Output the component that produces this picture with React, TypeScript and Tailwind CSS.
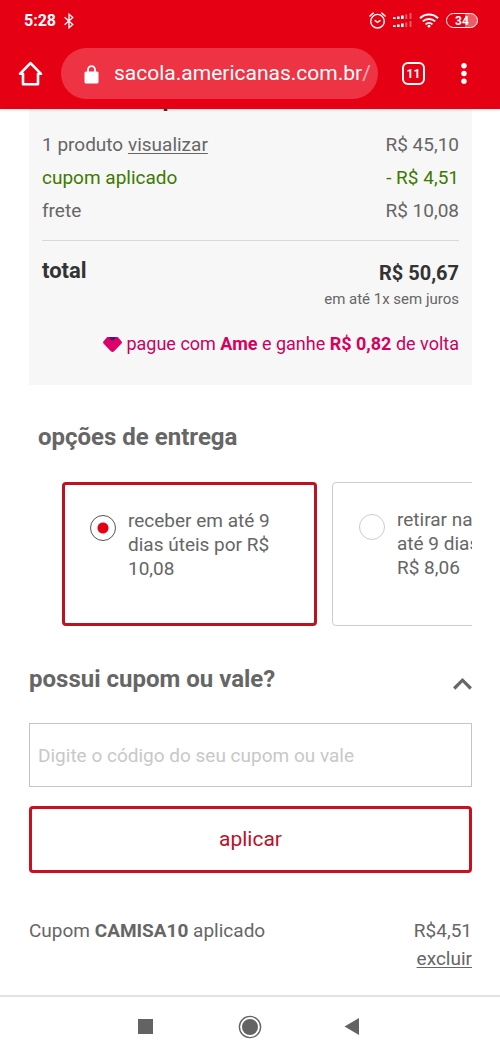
import { useState } from "react";
import clsx from "clsx";

const summary = [
  { label: "1 produto", value: "R$ 45,10", link: "visualizar" },
  { label: "cupom aplicado", value: "- R$ 4,51", discount: true },
  { label: "frete", value: "R$ 10,08" },
];

const deliveryOptions = [
  { id: "receber", text: "receber em até 9\ndias úteis por R$\n10,08" },
  { id: "retirar", text: "retirar na loja em\naté 9 dias por\nR$ 8,06" },
];

function StatusBar() {
  return (
    <div className="flex h-[41px] items-center justify-between pl-6 pr-[22px]">
      <div className="flex items-center gap-2">
        <span className="text-base font-bold">5:28</span>
        <svg width="10" height="16" viewBox="0 0 10 16" fill="none" stroke="currentColor" strokeWidth="1.3">
          <path d="M.6 4.2 8.8 11.4 5 14.8V1.2L8.8 4.6.6 11.8" />
        </svg>
      </div>
      <div className="flex items-center gap-[7px]">
        {/* alarm */}
        <svg width="17" height="17" viewBox="0 0 17 17" fill="none" stroke="currentColor" strokeWidth="1.4" strokeLinecap="round">
          <circle cx="8.5" cy="9.2" r="6.8" />
          <path d="M.9 4 4.2 1.1M16.1 4 12.8 1.1M6.2 8.6l2.3 1.8 2.5-1.8" />
        </svg>
        {/* dual sim signal */}
        <svg width="19" height="16" viewBox="0 0 19 16" fill="currentColor">
          <path d="M0 4.3h2.6V6H0zM4 3.4h2.6V6H4zM8 2.4h2.6V6H8zM0 12.3h2.6V14H0zM4 11.4h2.6V14H4zM8 10.4h2.6V14H8z" />
          <path opacity=".4" d="M12.4 1.4h1.8V6h-1.8zM16.6 0h1.8v6h-1.8zM12.4 9.4h1.8V14h-1.8zM16.6 8h1.8v6h-1.8z" />
        </svg>
        {/* wifi */}
        <svg width="20" height="15" viewBox="0 0 20 15" fill="none" stroke="currentColor" strokeWidth="2">
          <path d="M1 5.2a13 13 0 0 1 18 0M3.8 8.4a9 9 0 0 1 12.4 0M6.6 11.4a5 5 0 0 1 6.8 0" />
          <circle cx="10" cy="13.2" r="1.4" fill="currentColor" stroke="none" />
        </svg>
        <span className="flex h-[15px] w-8 items-center justify-center rounded-full border border-white bg-linear-to-r from-[#e60014] from-60% to-[#ef5a66] to-60% text-xs font-bold">
          34
        </span>
      </div>
    </div>
  );
}

function BrowserBar() {
  return (
    <div className="flex h-[68px] items-center pl-[18px] pr-6 pb-[3px]">
      <button aria-label="Início" className="mr-[18px]">
        <svg width="25" height="25" viewBox="0 0 25 25" fill="none" stroke="currentColor" strokeWidth="2.6" strokeLinejoin="round" strokeLinecap="round">
          <path d="M2 12.8 12.5 2.2 23 12.8h-3v10.4H5V12.8z" />
        </svg>
      </button>
      <div className="flex h-[51px] min-w-0 flex-1 items-center gap-[15px] rounded-full bg-[#ee3344] pt-px pl-[23px]">
        <svg width="15" height="19" viewBox="0 0 15 19" className="shrink-0">
          <path d="M4 8V4.7a3.5 3.5 0 0 1 7 0V8" fill="none" stroke="currentColor" strokeWidth="1.8" />
          <rect x="0.5" y="6.4" width="14" height="12" rx="1.5" fill="currentColor" />
        </svg>
        <span className="truncate text-[21px]">
          sacola.americanas.com.br<span className="opacity-60">/</span>
        </span>
      </div>
      <button
        aria-label="Abas"
        className="ml-6 flex size-[23px] items-center justify-center rounded-md border-2 border-white text-xs font-bold"
      >
        11
      </button>
      <button aria-label="Menu" className="ml-[27px] flex w-6 justify-center">
        <svg width="6" height="21" viewBox="0 0 6 21" fill="currentColor">
          <circle cx="3" cy="2.8" r="2.7" />
          <circle cx="3" cy="10.5" r="2.7" />
          <circle cx="3" cy="18.2" r="2.7" />
        </svg>
      </button>
    </div>
  );
}

function OrderSummary() {
  return (
    <section className="overflow-hidden bg-[#f7f7f7] px-[13px] pb-[25px]">
      {/* scrolled under the browser bar */}
      <div className="flex h-5 items-start overflow-hidden">
        <h2 className="-mt-[23px] text-2xl leading-6 font-bold text-[#333]">resumo do pedido</h2>
      </div>
      <dl className="flex flex-col">
        {summary.map((row) => (
          <div
            key={row.label}
            className={clsx("flex h-[33px] items-center justify-between", row.discount ? "text-[#3d7a00]" : "text-[#666]")}
          >
            <dt>
              {row.label}
              {row.link && (
                <>
                  {" "}
                  <a href="#produtos" className="underline underline-offset-2">{row.link}</a>
                </>
              )}
            </dt>
            <dd>{row.value}</dd>
          </div>
        ))}
      </dl>
      <div className="mt-3 flex justify-between border-t border-[#d9d9d9] pt-4 text-[#333]">
        <span className="text-[22px] leading-7 font-bold">total</span>
        <div className="text-right">
          <p className="text-[20px] leading-8 font-bold">R$ 50,67</p>
          <p className="text-[15px] leading-5 text-[#666]">em até 1x sem juros</p>
        </div>
      </div>
      <p className="mt-[19px] flex h-8 items-center justify-end gap-1 text-lg text-[#c9005f]">
        <svg width="19" height="15" viewBox="0 0 19 15">
          <path d="M4.2 0h10.6l3.8 4.6c.5.6.4 1.4-.1 1.9l-7.4 7.7c-.9.9-2.3.9-3.2 0L.5 6.5C0 6-.1 5.2.4 4.6z" fill="#dc0068" />
          <path d="M6 0h7l-1.9 3.2H7.9z" fill="#4b1587" />
        </svg>
        <span>
          pague com <strong className="text-[#d6005d]">Ame</strong> e ganhe{" "}
          <strong className="text-[#d6005d]">R$ 0,82</strong> de volta
        </span>
      </p>
    </section>
  );
}

function DeliveryOptions() {
  const [selected, setSelected] = useState("receber");

  return (
    <section className="mt-9">
      <h2 className="pl-[9px] text-2xl font-bold">opções de entrega</h2>
      <div className="mt-[29px] flex gap-[15px] overflow-hidden pl-[33px]">
        {deliveryOptions.map((option) => {
          const active = option.id === selected;
          return (
            <label
              key={option.id}
              className={clsx(
                "flex h-36 w-[255px] shrink-0 items-start gap-3 rounded",
                active ? "border-3 border-[#be1220] pt-6 pl-[25px]" : "border border-[#ccc] pt-[25px] pl-[26px]"
              )}
            >
              <input
                type="radio"
                name="entrega"
                checked={active}
                onChange={() => setSelected(option.id)}
                className={clsx(
                  "mt-[6px] size-[26px] shrink-0 appearance-none rounded-full border",
                  active
                    ? "border-[#555] bg-[radial-gradient(circle,#e60014_5px,transparent_6px)]"
                    : "border-[#ccc]"
                )}
              />
              <span className="leading-6 whitespace-pre">{option.text}</span>
            </label>
          );
        })}
      </div>
    </section>
  );
}

function Coupon() {
  return (
    <section className="mt-[37px]">
      <div className="flex items-center justify-between">
        <h2 className="text-2xl font-bold">possui cupom ou vale?</h2>
        <button aria-label="Recolher">
          <svg width="19" height="13" viewBox="0 0 19 13" fill="none" stroke="currentColor" strokeWidth="3.2" className="mt-2">
            <path d="M1.2 11.5 9.5 3.2l8.3 8.3" />
          </svg>
        </button>
      </div>
      <form className="mt-7 flex flex-col gap-[19px]" onSubmit={(e) => e.preventDefault()}>
        <input
          type="text"
          aria-label="Código do cupom ou vale"
          placeholder="Digite o código do seu cupom ou vale"
          className="h-16 w-full border border-[#c4c4cc] px-2 outline-none placeholder:text-[#c8c8c8]"
        />
        <button className="h-[67px] rounded border-3 border-[#c8101f] text-[21px] text-[#bd1025]">aplicar</button>
      </form>
      <div className="mt-11 flex justify-between leading-7">
        <p>
          Cupom <strong>CAMISA10</strong> aplicado
        </p>
        <div className="flex flex-col items-end">
          <span>R$4,51</span>
          <a href="#excluir" className="underline underline-offset-2">excluir</a>
        </div>
      </div>
    </section>
  );
}

function SystemNav() {
  return (
    <nav className="flex h-[61px] items-center justify-center gap-[82px] border-t-2 border-[#e2e2e2] text-[#636363]">
      <button aria-label="Recentes" className="flex w-[22px] justify-center">
        <span className="size-[15px] bg-current" />
      </button>
      <button aria-label="Tela inicial">
        <svg width="24" height="24" viewBox="0 0 24 24" fill="currentColor">
          <circle cx="12" cy="12" r="10.6" fill="none" stroke="currentColor" strokeWidth="1.4" />
          <circle cx="12" cy="12" r="8" />
        </svg>
      </button>
      <button aria-label="Voltar" className="flex w-[22px] justify-center pr-2">
        <svg width="15" height="17" viewBox="0 0 15 17" fill="currentColor" className="shrink-0">
          <path d="M15 0v17L.5 8.5z" />
        </svg>
      </button>
    </nav>
  );
}

export default function App() {
  return (
    <div className="flex min-h-screen flex-col bg-white font-[Roboto,sans-serif] text-[19px] text-[#666]">
      <header className="relative bg-[#e60014] text-white shadow-sm">
        <StatusBar />
        <BrowserBar />
      </header>
      <main className="flex-1 pr-7 pb-5 pl-[29px]">
        <OrderSummary />
        <DeliveryOptions />
        <Coupon />
      </main>
      <SystemNav />
    </div>
  );
}
